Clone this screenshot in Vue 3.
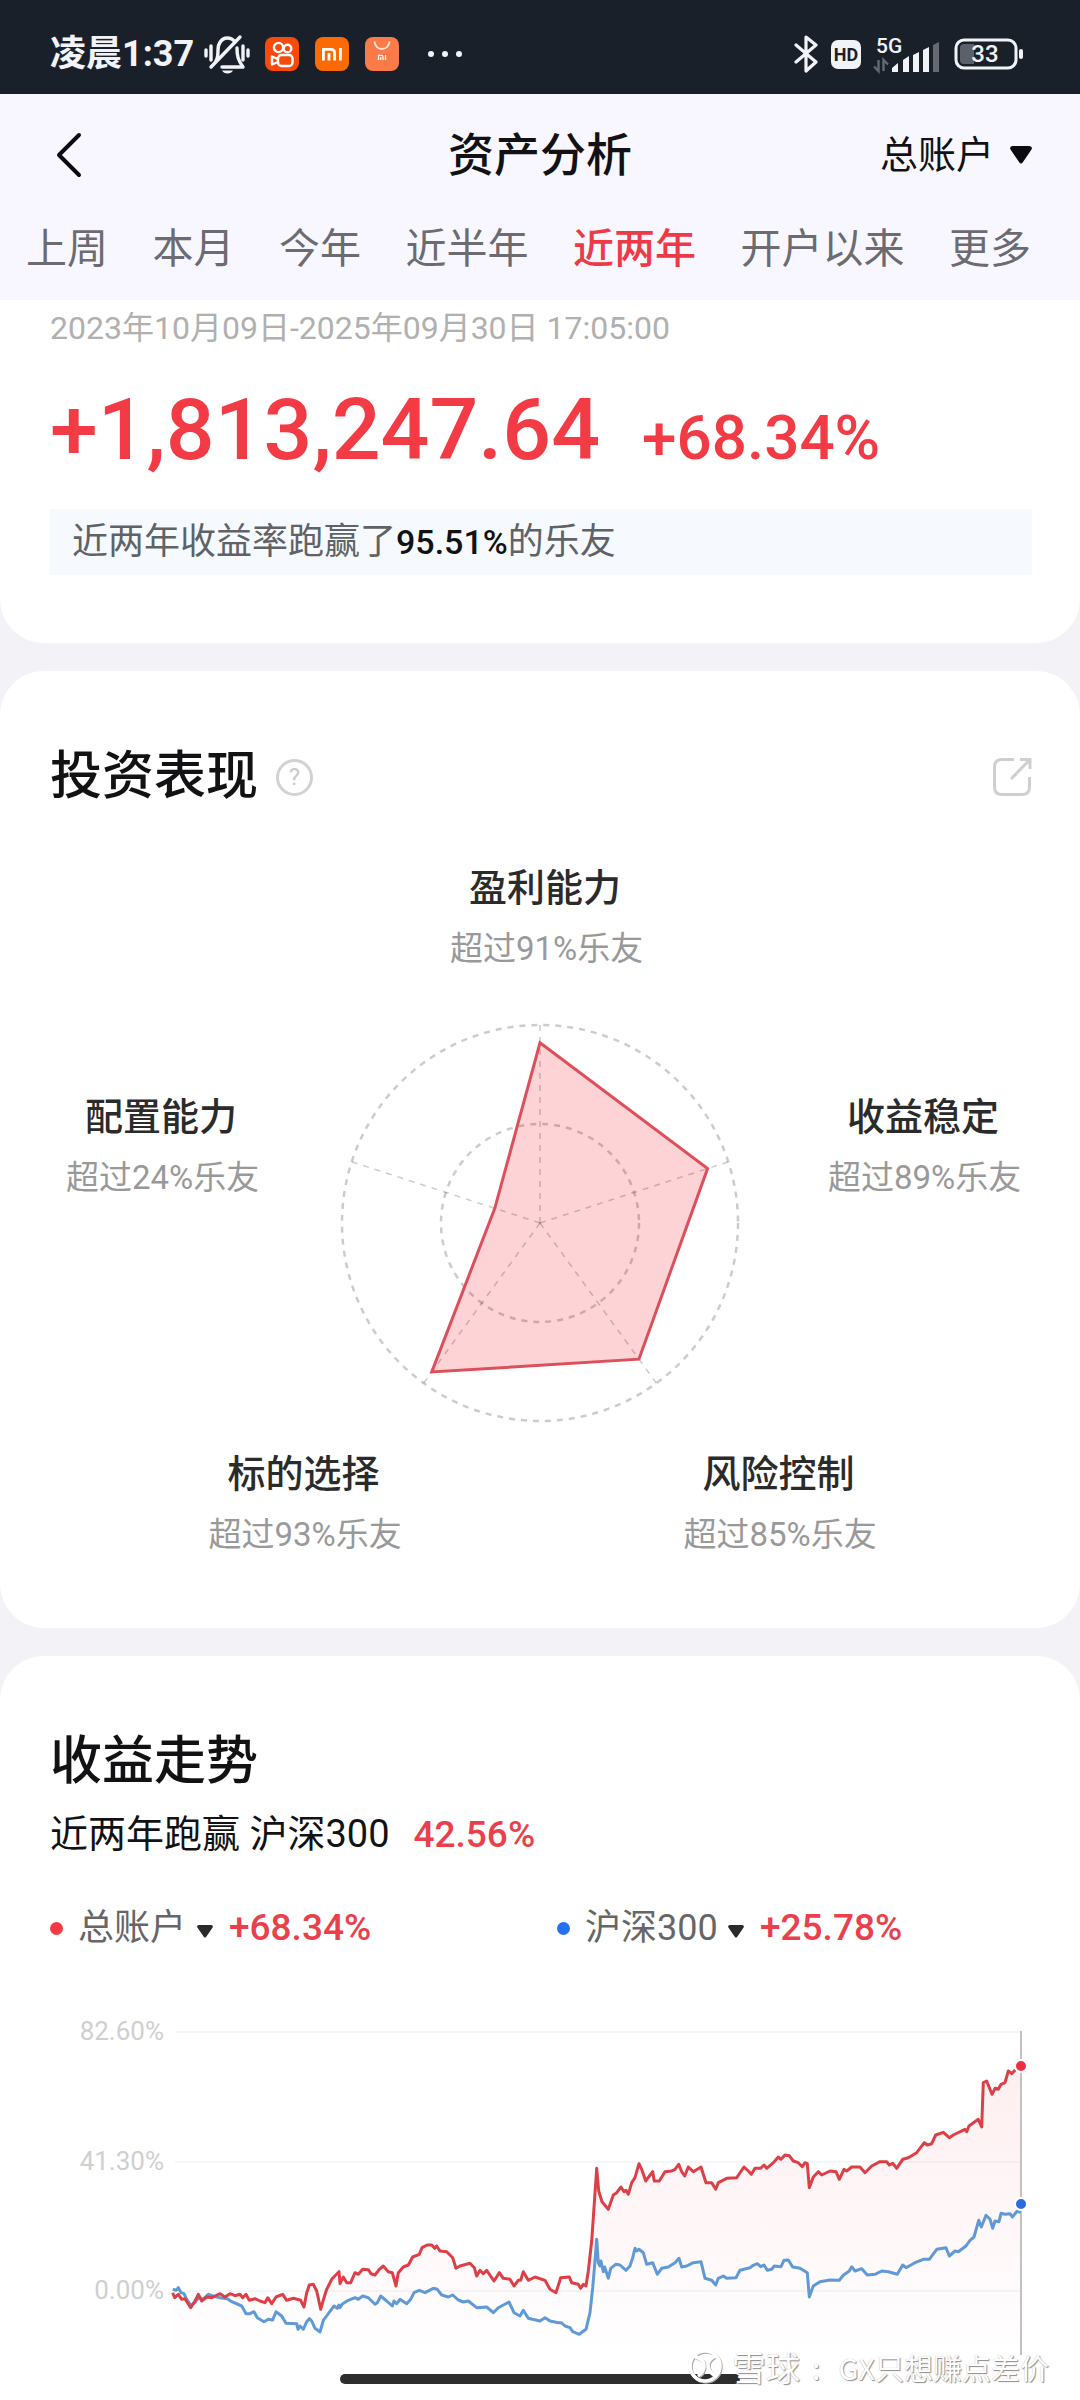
<script setup>
import { ref } from 'vue'

const ranges = ['上周', '本月', '今年', '近半年', '近两年', '开户以来', '更多']
const activeRange = ref('近两年')

// Radar geometry: five axes, clockwise from the top
const RADIUS = 198
const scores = [91, 89, 85, 93, 24]
const spoke = (i, length) => {
  const angle = (Math.PI * 2 * i) / 5 - Math.PI / 2
  return [Math.cos(angle) * length, Math.sin(angle) * length]
}
const axes = scores.map((_, i) => spoke(i, RADIUS))
const shape = scores.map((s, i) => spoke(i, (RADIUS * s) / 100).join(',')).join(' ')

// Trend samples, three units per chart pixel
const account = [98,875,104,890,115,880,125,895,135,893,152,920,165,900,175,880,185,900,200,888,215,890,225,885,240,878,255,888,270,878,285,884,300,880,308,890,318,880,328,898,345,893,360,900,375,905,383,890,395,908,408,888,428,880,440,898,460,892,482,898,492,918,500,875,508,852,520,850,530,870,542,925,552,890,560,865,575,835,597,812,600,848,610,828,620,845,632,845,645,815,655,820,668,805,685,806,693,818,705,822,718,805,730,795,745,812,757,815,768,855,775,815,790,798,805,792,818,768,838,760,846,740,862,732,875,732,884,742,890,735,900,750,920,752,938,770,948,802,960,795,990,787,1003,800,1010,825,1020,808,1030,818,1040,808,1062,840,1078,815,1090,832,1110,835,1122,855,1135,838,1142,838,1150,812,1165,838,1185,828,1215,838,1230,865,1248,875,1262,830,1288,828,1295,845,1315,850,1322,862,1330,850,1338,855,1345,810,1355,720,1362,620,1370,502,1376,570,1386,602,1405,625,1420,582,1430,575,1443,558,1452,572,1458,568,1465,580,1475,545,1485,530,1497,488,1505,505,1517,540,1538,512,1543,540,1558,540,1575,512,1595,510,1605,505,1616,490,1625,512,1634,525,1645,498,1660,512,1683,498,1698,545,1715,545,1727,565,1735,545,1760,532,1790,530,1812,498,1825,510,1834,520,1845,502,1862,502,1872,492,1880,502,1900,485,1915,468,1923,475,1935,462,1948,464,1960,480,1975,485,1987,497,1995,485,2002,488,2008,560,2020,528,2035,512,2045,522,2070,510,2088,512,2098,535,2112,505,2120,510,2135,498,2160,498,2175,515,2195,495,2220,482,2240,482,2248,492,2258,487,2270,502,2288,475,2305,470,2330,455,2353,425,2362,432,2375,428,2387,402,2410,394,2428,410,2440,402,2475,385,2480,392,2487,375,2515,355,2525,378,2530,245,2540,240,2556,280,2565,262,2575,265,2583,250,2595,245,2605,210,2615,218,2623,210,2643,195]
const benchmark = [98,865,108,868,115,860,123,875,132,878,140,895,152,912,165,905,175,890,190,895,205,880,220,885,240,890,262,893,275,902,305,915,318,938,330,938,342,932,352,950,372,962,385,955,398,957,408,932,425,945,438,967,470,968,474,985,480,975,490,985,500,962,508,953,515,960,525,982,540,993,550,958,565,938,582,915,592,922,597,912,600,920,608,908,625,898,645,890,655,895,668,885,685,890,705,910,712,905,722,885,740,900,757,915,762,900,770,908,780,895,800,908,812,895,822,875,838,868,855,875,880,862,892,865,905,882,925,888,938,882,955,897,970,903,985,900,1010,920,1040,918,1060,935,1075,920,1107,903,1122,935,1140,945,1150,928,1165,952,1200,960,1215,950,1230,960,1255,965,1264,965,1275,975,1290,980,1298,992,1318,1000,1338,985,1350,935,1358,860,1364,790,1370,715,1375,785,1380,795,1383,780,1390,812,1394,798,1405,832,1412,802,1427,790,1440,792,1458,808,1470,795,1478,770,1485,742,1490,750,1497,745,1510,755,1520,790,1538,785,1552,820,1565,802,1585,798,1605,785,1617,772,1625,798,1640,795,1660,785,1683,782,1695,832,1715,838,1727,852,1735,832,1750,825,1760,832,1788,830,1800,808,1830,800,1840,793,1852,788,1862,797,1872,792,1882,808,1895,805,1903,795,1923,797,1932,778,1945,777,1958,798,1980,802,2002,815,2008,888,2020,855,2040,842,2070,837,2098,838,2110,823,2128,810,2135,797,2145,810,2165,803,2182,822,2205,820,2225,810,2245,812,2272,820,2288,792,2298,800,2325,785,2350,775,2368,775,2390,745,2418,740,2428,765,2445,750,2455,752,2478,735,2490,718,2502,708,2516,658,2524,678,2538,643,2550,655,2558,682,2565,660,2577,662,2583,637,2595,640,2610,638,2617,648,2632,630,2642,635]

const plot = (samples) => {
  const points = []
  for (let i = 0; i < samples.length; i += 2) {
    points.push(`${(samples[i] / 3 + 90).toFixed(1)},${(samples[i + 1] / 3).toFixed(1)}`)
  }
  return points.join(' ')
}
const accountLine = plot(account)
const benchmarkLine = plot(benchmark)
const ticks = [
  { label: '82.60%', y: 31 },
  { label: '41.30%', y: 161 },
  { label: '0.00%', y: 290 },
]
</script>

<template>
  <div class="page">
    <div class="status">
      <span class="clock">凌晨1:37</span>
      <svg class="bell" width="46" height="40" viewBox="0 0 46 40" fill="none" stroke="#f2f3f7" stroke-width="3.4" stroke-linecap="round">
        <path d="M2 16v6M7 12v14M39 12v14M44 16v6" />
        <path d="M12 27c2-3 2-6 2-11 0-7 4-12 9-12 4 0 6 1 8 4M33 14c0 8 1 12 6 19H18" stroke-linejoin="round" />
        <path d="M36 3 7 33" />
        <path d="M18 36.500h11c-1 2-3 3-5.500 3s-4.500-1-5.500-3z" fill="#f2f3f7" stroke="none" />
      </svg>
      <svg class="app" width="34" height="34" viewBox="0 0 34 34" fill="none" stroke="#fff" stroke-width="2.400">
        <rect width="34" height="34" rx="8" fill="#f9490b" stroke="none" />
        <circle cx="13.500" cy="10.500" r="4.600" /><circle cx="22.500" cy="11.500" r="3.800" />
        <rect x="13" y="18" width="14.500" height="11" rx="3.500" />
        <path d="M13 22l-6-2.500v8L13 25" stroke-linejoin="round" />
      </svg>
      <svg class="app" width="34" height="34" viewBox="0 0 34 34" fill="none" stroke="#fff" stroke-width="2.800">
        <rect width="34" height="34" rx="8" fill="#fc6a04" stroke="none" />
        <path d="M8.400 23.500V12.400h7.500c2.500 0 3.700 1.200 3.700 3.600v7.500M14 16v7.500M25.400 11v12.500" />
      </svg>
      <svg class="app" width="34" height="34" viewBox="0 0 34 34" fill="none" stroke="#fff">
        <rect width="34" height="34" rx="8" fill="#fa7a48" stroke="none" />
        <path d="M9.500 4.500c1 10 14 10 15 0" stroke-width="2" opacity=".8" />
        <path d="M13.500 23v-4.700h3c1 0 1.500.5 1.500 1.500V23M15.800 20v3M20.500 18v5" stroke-width="1.200" />
      </svg>
      <svg class="more" width="36" height="8" viewBox="0 0 36 8" fill="#f2f3f7">
        <circle cx="4" cy="4" r="3" /><circle cx="18" cy="4" r="3" /><circle cx="32" cy="4" r="3" />
      </svg>
      <svg class="bluetooth" width="24" height="40" viewBox="0 0 24 40" fill="none" stroke="#f2f3f7" stroke-width="3.200" stroke-linecap="round" stroke-linejoin="round">
        <path d="M2 11l20 17-10 9V3l10 8L2 28" />
      </svg>
      <span class="hd">HD</span>
      <svg class="signal" width="68" height="42" viewBox="0 -4 68 42">
        <text x="3" y="16" class="net">5G</text>
        <path d="M5.500 23v11L1 29.500M10.500 34V23l4.500 4.500" fill="none" stroke="#646972" stroke-width="2.400" />
        <g fill="#f2f3f7">
          <path d="M19 35v-4l6-5v9zM30 35V23l6-4v16zM40 35V18l6-3v20zM50 35V13l6-3v25z" />
          <path d="M60 35V8l6-3v30z" fill="#646972" />
        </g>
      </svg>
      <svg class="battery" width="70" height="32" viewBox="0 0 70 32">
        <rect x="2" y="2" width="60" height="28" rx="8" fill="none" stroke="#f2f3f7" stroke-width="3" />
        <path d="M10 6h10v20H10q-4 0-4-4V10q0-4 4-4z" fill="#5b6069" />
        <rect x="65" y="11" width="4" height="10" rx="2" fill="#f2f3f7" />
        <text x="31" y="24" text-anchor="middle" class="charge">33</text>
      </svg>
    </div>

    <header class="header">
      <div class="bar">
        <button class="back" type="button" aria-label="返回">
          <svg width="26" height="46" viewBox="0 0 26 46" fill="none" stroke="#0c0c10" stroke-width="4" stroke-linecap="round" stroke-linejoin="round">
            <path d="M23 3 3 23l20 20" />
          </svg>
        </button>
        <h1>资产分析</h1>
        <label class="picker">
          <select aria-label="账户"><option>总账户</option></select>
          <svg width="22" height="18" viewBox="0 0 22 18" fill="#0c0c10"><path d="M2.500 0h17q3.500.5 2 3.500L13 16q-2 3-4 0L.5 3.500Q-1 .5 2.500 0z" /></svg>
        </label>
      </div>
      <nav class="tabs">
        <button v-for="r in ranges" :key="r" type="button" :class="{ active: r === activeRange }" @click="activeRange = r">{{ r }}</button>
      </nav>
    </header>

    <main>
      <section class="card summary">
        <p class="period">2023年10月09日-2025年09月30日 17:05:00</p>
        <p class="amounts"><strong class="amount">+1,813,247.64</strong><strong class="rate">+68.34%</strong></p>
        <p class="note">近两年收益率跑赢了<b>95.51%</b>的乐友</p>
      </section>

      <section class="card performance">
        <div class="card-head">
          <h2>投资表现</h2>
          <button class="help" type="button" aria-label="说明">?</button>
          <button class="share" type="button" aria-label="分享">
            <svg width="40" height="40" viewBox="0 0 40 40" fill="none" stroke="#cfcfcf" stroke-width="3">
              <path d="M22 2.500H10Q2.500 2.500 2.500 10v20Q2.500 37.500 10 37.500h20q7.500 0 7.500-7.500V20" />
              <path d="M19 22 38 2.500M28 2.500h10V12" />
            </svg>
          </button>
        </div>
        <div class="radar">
          <div class="row top">
            <div class="trait"><h3>盈利能力</h3><p>超过91%乐友</p></div>
          </div>
          <div class="row middle">
            <div class="trait"><h3>配置能力</h3><p>超过24%乐友</p></div>
            <svg class="web" viewBox="-200 -202 404 404" fill="none">
              <polygon :points="shape" fill="#fed3d6" />
              <g stroke="#000" stroke-opacity=".2" stroke-width="2.500" stroke-dasharray="6 6">
                <circle r="198" /><circle r="99" />
                <line v-for="(a, i) in axes" :key="i" x1="0" y1="0" :x2="a[0]" :y2="a[1]" stroke-width="1.500" />
              </g>
              <polygon :points="shape" stroke="#dc4f5b" stroke-width="3" />
            </svg>
            <div class="trait"><h3>收益稳定</h3><p>超过89%乐友</p></div>
          </div>
          <div class="row bottom">
            <div class="trait"><h3>标的选择</h3><p>超过93%乐友</p></div>
            <div class="trait"><h3>风险控制</h3><p>超过85%乐友</p></div>
          </div>
        </div>
      </section>

      <section class="card trend">
        <div class="card-head"><h2>收益走势</h2></div>
        <p class="versus">近两年跑赢 沪深300<b>42.56%</b></p>
        <div class="legend">
          <div class="series">
            <i class="dot red"></i>
            <label class="picker small">
              <select aria-label="对比账户"><option>总账户</option></select>
              <svg width="16" height="13" viewBox="0 0 22 18" fill="#2a2a2a"><path d="M2.500 0h17q3.500.5 2 3.500L13 16q-2 3-4 0L.5 3.500Q-1 .5 2.500 0z" /></svg>
            </label>
            <b>+68.34%</b>
          </div>
          <div class="series">
            <i class="dot blue"></i>
            <label class="picker small">
              <select aria-label="对比指数"><option>沪深300</option></select>
              <svg width="16" height="13" viewBox="0 0 22 18" fill="#2a2a2a"><path d="M2.500 0h17q3.500.5 2 3.500L13 16q-2 3-4 0L.5 3.500Q-1 .5 2.500 0z" /></svg>
            </label>
            <b>+25.78%</b>
          </div>
        </div>
        <svg class="chart" viewBox="0 0 982 360" fill="none">
          <defs>
            <linearGradient id="fade" gradientUnits="userSpaceOnUse" x1="0" y1="60" x2="0" y2="355">
              <stop offset="0" stop-color="#f33b45" stop-opacity=".08" />
              <stop offset=".6" stop-color="#f33b5a" stop-opacity=".04" />
              <stop offset="1" stop-color="#f33b5a" stop-opacity="0" />
            </linearGradient>
          </defs>
          <g v-for="t in ticks" :key="t.label">
            <line x1="125" x2="971" :y1="t.y" :y2="t.y" stroke="#f6f6f6" stroke-width="2" />
            <text x="114" :y="t.y + 8" text-anchor="end" class="tick">{{ t.label }}</text>
          </g>
          <polygon :points="`${accountLine} 971,355 123,355`" fill="url(#fade)" />
          <line x1="971" x2="971" y1="30" y2="354" stroke="#c4c1c3" stroke-width="2" />
          <g stroke-width="3" stroke-linejoin="round">
            <polyline :points="benchmarkLine" stroke="#5f9ad6" />
            <polyline :points="accountLine" stroke="#dd3f47" />
          </g>
          <g stroke="#fff" stroke-width="2">
            <circle cx="971" cy="65" r="6" fill="#ee2f40" />
            <circle cx="971" cy="203" r="6" fill="#2a6be0" />
          </g>
        </svg>
      </section>
    </main>

    <div class="home"></div>
    <div class="mark">
      <svg width="36" height="38" viewBox="0 0 36 38" fill="none" stroke-linecap="round">
        <g stroke="#a9a9a9" stroke-width="3.500" transform="translate(1 1)">
          <circle cx="17" cy="18" r="15" /><path d="M8 9q9 3 8 10-1 6-5 8M27 8q-7 4-7 9 0 6 6 10" />
        </g>
        <g stroke="#fff" stroke-width="3.500">
          <circle cx="17" cy="18" r="15" /><path d="M8 9q9 3 8 10-1 6-5 8M27 8q-7 4-7 9 0 6 6 10" />
        </g>
      </svg>
      <span class="brand">雪球</span><span class="colon">:</span><span class="user">GX只想赚点差价</span>
    </div>
  </div>
</template>

<style>
body {
  margin: 0;
  background: #fff;
}
</style>

<style scoped>
.page {
  position: relative;
  overflow: hidden;
  min-height: 100vh;
  background: #f3f2f7;
  color: #121214;
  font-family: Roboto, "Noto Sans CJK SC", sans-serif;
}
h1, h2, h3, p { margin: 0; font-weight: 500; }
button, select {
  margin: 0;
  padding: 0;
  border: 0;
  background: none;
  color: inherit;
  font: inherit;
}
select { appearance: none; }
svg { display: block; flex-shrink: 0; }

.status {
  display: flex;
  align-items: center;
  box-sizing: border-box;
  height: 94px;
  padding: 14px 56px 0 50px;
  background: #1a202a;
  color: #f2f3f7;
}
.clock { font-size: 36px; line-height: 40px; font-weight: 700; white-space: nowrap; }
.bell { margin: 0 15px 0 10px; }
.app { margin-right: 16px; }
.more { margin-left: 12px; margin-right: auto; }
.hd {
  margin: 0 12px 0 13px;
  width: 30px;
  border-radius: 7px;
  background: #f2f3f7;
  color: #1a202a;
  font-size: 18px;
  line-height: 29px;
  font-weight: 700;
  text-align: center;
}
.net { fill: #f2f3f7; font-size: 21px; font-weight: 500; }
.charge { fill: #f2f3f7; font-size: 24px; font-weight: 500; }
.battery { margin-left: 13px; }

.header { padding-bottom: 18px; background: #f8f7ff; }
.bar {
  display: grid;
  grid-template-columns: 1fr auto 1fr;
  align-items: center;
  height: 122px;
  padding: 0 48px;
}
.back { justify-self: start; margin-left: 8px; }
h1 { font-size: 46px; line-height: 60px; }
.picker { display: flex; align-items: center; gap: 15px; justify-self: end; font-size: 38px; line-height: 52px; }
.picker.small { gap: 10px; font-size: 36px; color: #666; }
.picker.small svg { margin-top: 6px; }
.tabs { display: flex; justify-content: space-between; height: 66px; padding: 0 49px 0 26px; }
.tabs button { flex-shrink: 0; color: #6b6b70; font-size: 41px; line-height: 66px; }
.tabs .active { color: #ee3a47; font-weight: 500; }

.card {
  margin-bottom: 28px;
  padding: 74px 48px 62px 50px;
  border-radius: 44px;
  background: #fff;
}
.summary { padding-top: 8px; padding-bottom: 68px; border-radius: 0 0 44px 44px; }
.period { color: #b0b0b0; font-size: 32px; line-height: 40px; font-weight: 400; }
.amounts { display: flex; align-items: baseline; gap: 42px; height: 100px; margin-top: 32px; color: #f33b45; line-height: 100px; }
.amount { font-size: 86px; font-weight: 500; }
.rate { font-size: 62px; font-weight: 500; }
.note {
  margin-top: 29px;
  padding: 0 22px;
  background: #f6fafe;
  color: #5f6266;
  font-size: 36px;
  line-height: 66px;
  font-weight: 400;
}
.note b { color: #121214; font-size: 34px; line-height: 40px; font-weight: 500; }

.card-head { display: flex; align-items: center; height: 64px; }
h2 { font-size: 52px; line-height: 64px; }
.help {
  box-sizing: border-box;
  width: 37px;
  height: 37px;
  margin-left: 18px;
  border: 3px solid #d2d2d2;
  border-radius: 50%;
  color: #c8c8c8;
  font-size: 24px;
  line-height: 31px;
}
.share { margin-left: auto; }

.radar { margin-top: 49px; }
.row { display: flex; justify-content: center; }
.trait { width: 190px; text-align: center; white-space: nowrap; }
.trait h3 { color: #2b2b2b; font-size: 38px; line-height: 60px; }
.trait p { color: #999; font-size: 33px; line-height: 62px; font-weight: 400; }
.top { padding-left: 8px; }
.middle { justify-content: space-between; margin-top: 41px; padding: 0 14px 0 16px; }
.middle .trait { margin-top: 66px; }
.web { width: 404px; height: 404px; }
.bottom { gap: 285px; margin-top: 19px; }

.trend { margin-bottom: 0; padding-bottom: 40px; border-radius: 44px 44px 0 0; }
.versus { margin-top: 14px; font-size: 38px; line-height: 52px; font-weight: 400; }
.trend b { color: #ea404b; font-size: 37px; font-weight: 500; }
.trend .versus b { margin-left: 24px; }
.legend { display: grid; grid-template-columns: 507fr 475fr; margin-top: 41px; }
.series { display: flex; align-items: center; }
.series b { margin-left: 16px; line-height: 52px; }
.dot { width: 13px; height: 13px; margin-right: 15px; border-radius: 50%; }
.red { background: #f33b45; }
.blue { background: #2472f0; }
.chart { width: 100%; margin-top: 47px; }
.tick { fill: #cfcfcf; font-size: 26px; }

.home {
  position: absolute;
  bottom: 17px;
  left: 50%;
  width: 400px;
  height: 10px;
  margin-left: -200px;
  border-radius: 5px;
  background: #2e2e2e;
}
.mark {
  position: absolute;
  right: 31px;
  bottom: 14px;
  display: flex;
  align-items: center;
  height: 40px;
  color: #fff;
  font-family: "Noto Sans CJK SC", sans-serif;
  line-height: 40px;
  text-shadow: 1px 1px 1px #8c8c8c, 0 0 1px #b4b4b4;
}
.brand { margin-left: 8px; font-size: 34px; }
.colon { margin: 0 18px 0 12px; font-size: 30px; }
.user { font-size: 29px; }
</style>
